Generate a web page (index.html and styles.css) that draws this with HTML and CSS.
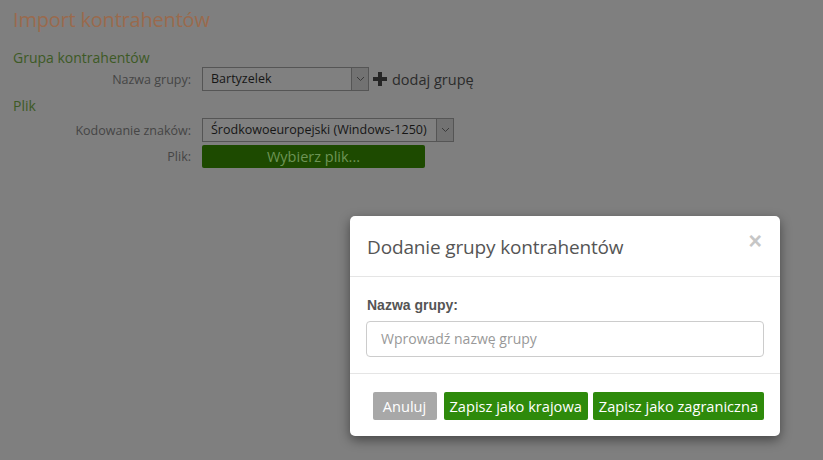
FILE: index.html
```html
<!DOCTYPE html>
<html lang="pl">
<head>
<meta charset="utf-8">
<title>Import kontrahentów</title>
<link rel="stylesheet" href="styles.css">
</head>
<body>
<div class="page">
  <h1 class="title">Import kontrahentów</h1>
  <h2 class="section">Grupa kontrahentów</h2>
  <div class="row">
    <label class="lbl">Nazwa grupy:</label>
    <div class="select sel-group"><span class="sel-text">Bartyzelek</span><span class="sel-arrow"><svg width="9" height="6" viewBox="0 0 9 6"><path d="M1 1 L4.5 4.5 L8 1" fill="none" stroke="#3a3a3a" stroke-width="1"/></svg></span></div>
    <a class="add"><svg class="plus" width="14" height="14" viewBox="0 0 14 14"><path d="M5 0h4v5h5v4H9v5H5V9H0V5h5z" fill="#262626"/></svg>dodaj grupę</a>
  </div>
  <h2 class="section sec2">Plik</h2>
  <div class="row row2">
    <label class="lbl">Kodowanie znaków:</label>
    <div class="select sel-enc"><span class="sel-text">Środkowoeuropejski (Windows-1250)</span><span class="sel-arrow"><svg width="9" height="6" viewBox="0 0 9 6"><path d="M1 1 L4.5 4.5 L8 1" fill="none" stroke="#3a3a3a" stroke-width="1"/></svg></span></div>
  </div>
  <div class="row row3">
    <label class="lbl">Plik:</label>
    <button class="file-btn">Wybierz plik...</button>
  </div>
</div>

<div class="modal">
  <div class="modal-header">
    <h3 class="modal-title">Dodanie grupy kontrahentów</h3>
    <span class="close">×</span>
  </div>
  <div class="modal-body">
    <label class="m-label">Nazwa grupy:</label>
    <div class="m-input">Wprowadź nazwę grupy</div>
  </div>
  <div class="modal-footer">
    <button class="btn btn-gray">Anuluj</button>
    <button class="btn btn-green">Zapisz jako krajowa</button>
    <button class="btn btn-green">Zapisz jako zagraniczna</button>
  </div>
</div>
</body>
</html>
```

FILE: styles.css
```css
html, body {
  margin: 0;
  padding: 0;
}
body {
  width: 823px;
  height: 460px;
  background: #7f7f7f;
  font-family: "Open Sans", "DejaVu Sans", sans-serif;
  position: relative;
  overflow: hidden;
}
.page {
  padding: 6px 0 0 13px;
}
.title {
  margin: 0;
  font-weight: 400;
  font-size: 20px;
  line-height: 28px;
  color: #9a6a4d;
  letter-spacing: -0.2px;
}
.section {
  margin: 15px 0 0 0;
  font-weight: 400;
  font-size: 14px;
  line-height: 18px;
  color: #3d5a25;
}
.sec2 {
  margin-top: 6px;
}
.row {
  display: flex;
  align-items: center;
  height: 24px;
}
.row2 {
  margin-top: 3px;
}
.row3 {
  height: 22px;
  margin-top: 3px;
}
.lbl {
  width: 178px;
  text-align: right;
  font-size: 12.5px;
  color: #454545;
  margin-right: 11px;
}
.select {
  display: flex;
  height: 24px;
  box-sizing: border-box;
  border: 1px solid #555;
  background: #808080;
  font-size: 12.5px;
  color: #161616;
}
.sel-group { width: 167px; }
.sel-enc { width: 252px; }
.sel-text {
  flex: 1;
  padding-left: 8px;
  line-height: 22px;
  white-space: nowrap;
}
.sel-arrow {
  width: 16px;
  border-left: 1px solid #555;
  background: #727272;
  display: flex;
  align-items: center;
  justify-content: center;
}
.add {
  display: flex;
  align-items: center;
  margin-left: 4px;
  font-size: 14.5px;
  color: #2b2b2b;
}
.plus {
  margin-right: 5px;
}
.file-btn {
  width: 223px;
  height: 23px;
  border: none;
  border-radius: 2px;
  background: #1d4a00;
  color: #6d9455;
  font-family: "Open Sans", "DejaVu Sans", sans-serif;
  font-size: 14.5px;
  padding: 0;
  line-height: 23px;
}

/* Modal overlay */
.modal {
  position: absolute;
  left: 350px;
  top: 216px;
  width: 430px;
  height: 220px;
  background: #fff;
  border-radius: 5px;
  box-shadow: 0 4px 12px rgba(0,0,0,0.45);
  display: flex;
  flex-direction: column;
}
.modal-header {
  height: 61px;
  box-sizing: border-box;
  border-bottom: 1px solid #e5e5e5;
  padding: 0 17px;
  display: flex;
  align-items: center;
  justify-content: space-between;
}
.modal-title {
  margin: 0;
  font-weight: 400;
  font-size: 19px;
  color: #555;
  padding-top: 1px;
  letter-spacing: -0.15px;
}
.close {
  font-family: "Liberation Sans", Arial, sans-serif;
  font-size: 23px;
  font-weight: 700;
  color: #c6c6c6;
  margin-top: -9px;
  margin-right: 1px;
}
.modal-body {
  height: 97px;
  box-sizing: border-box;
  padding: 19px 16px 0 16px;
  border-bottom: 1px solid #e5e5e5;
}
.m-label {
  display: block;
  font-family: "Liberation Sans", Arial, sans-serif;
  font-weight: 700;
  font-size: 14px;
  color: #555;
  line-height: 18px;
  margin-left: 1px;
}
.m-input {
  margin-top: 7px;
  height: 36px;
  box-sizing: border-box;
  border: 1px solid #ccc;
  border-radius: 4px;
  padding-left: 14px;
  font-size: 14px;
  line-height: 34px;
  color: #999;
}
.modal-footer {
  flex: 1;
  display: flex;
  justify-content: flex-end;
  align-items: flex-start;
  gap: 5px;
  padding: 18px 16px 0 0;
}
.btn {
  height: 28px;
  border: none;
  border-radius: 2px;
  font-family: "Open Sans", "DejaVu Sans", sans-serif;
  font-size: 14.6px;
  color: #fff;
  padding: 0 6px;
  line-height: 28px;
}
.btn-gray {
  background: #a8a8a8;
  width: 64px;
  margin-right: 2px;
}
.btn-green {
  background: #2e8a0b;
}
```
